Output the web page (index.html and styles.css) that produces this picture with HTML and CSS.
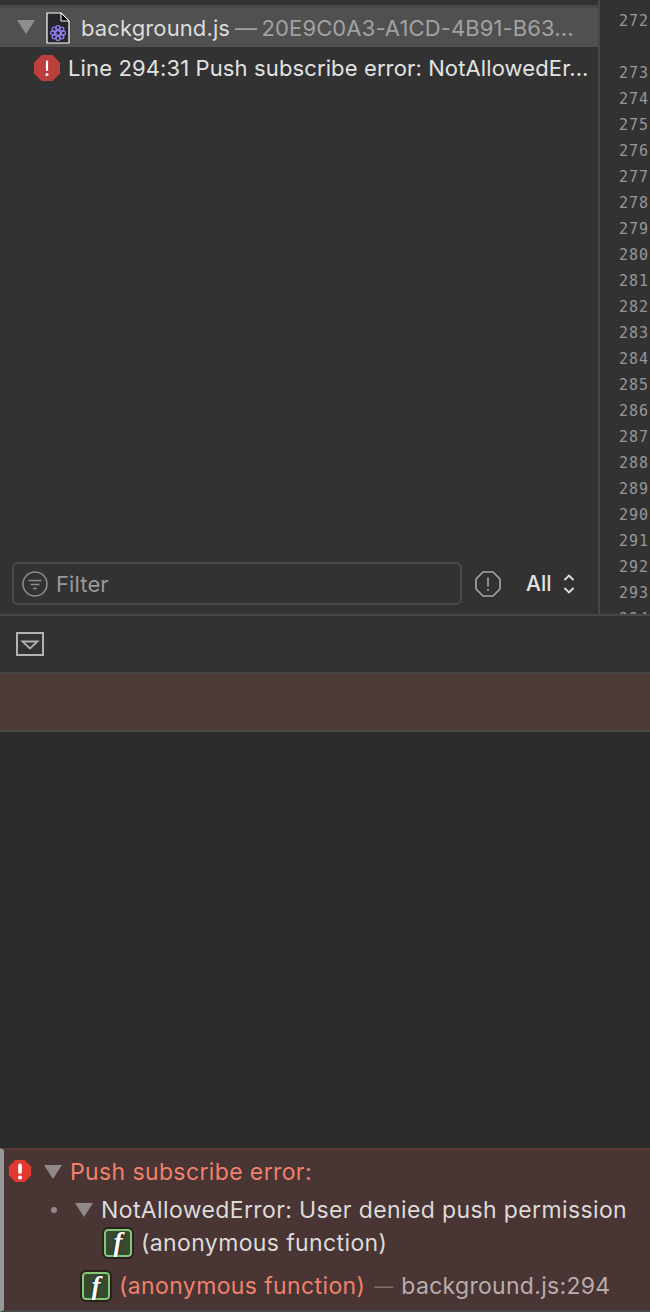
FILE: index.html
```html
<!DOCTYPE html>
<html lang="en">
<head>
<meta charset="utf-8">
<title>Web Inspector</title>
<link rel="stylesheet" href="styles.css">
</head>
<body>
<div class="app">
  <section class="top">
    <aside class="sidebar">
      <div class="sidebar-head"></div>
      <div class="tree">
        <div class="file-row">
          <svg class="disclosure" viewBox="0 0 18 14"><path d="M0 0H18L9 14Z"/></svg>
          <svg class="file-icon" viewBox="0 0 24 32">
            <path d="M1 1H15L23 9V31H1Z" fill="#26262a" stroke="#fff" stroke-width="1.2"/>
            <path d="M15 1L23 9H15Z" fill="#000" stroke="#fff" stroke-width="1"/>
            <g fill="none" stroke="#8f7cf0" stroke-width="1.3">
              <circle cx="12" cy="21" r="2.4"/>
              <circle cx="12" cy="15.6" r="2"/><circle cx="15.8" cy="17.2" r="2"/>
              <circle cx="17.4" cy="21" r="2"/><circle cx="15.8" cy="24.8" r="2"/>
              <circle cx="12" cy="26.4" r="2"/><circle cx="8.2" cy="24.8" r="2"/>
              <circle cx="6.6" cy="21" r="2"/><circle cx="8.2" cy="17.2" r="2"/>
            </g>
          </svg>
          <span class="file-name">background.js</span>
          <span class="file-id">— 20E9C0A3-A1CD-4B91-B63...</span>
        </div>
        <div class="issue-row">
          <svg class="issue-icon" viewBox="0 0 28 28">
            <path d="M8.5 1H19.5L27 8.5V19.5L19.5 27H8.5L1 19.5V8.5Z" fill="#bb3f3d"/>
            <rect x="12.9" y="6.5" width="2.2" height="10.5" rx="1" fill="#fff"/>
            <circle cx="14" cy="20.5" r="1.5" fill="#fff"/>
          </svg>
          <span class="issue-text">Line 294:31 Push subscribe error: NotAllowedEr...</span>
        </div>
      </div>
      <div class="filter-bar">
        <div class="filter-box">
          <svg class="filter-icon" viewBox="0 0 26 26" fill="none" stroke="#8b8b8b" stroke-width="1.6">
            <circle cx="13" cy="13" r="12"/>
            <path d="M6.5 9.5H19.5M8.5 13.5H17.5M11 17.5H15"/>
          </svg>
          <span class="filter-label">Filter</span>
        </div>
        <svg class="warn-icon" viewBox="0 0 26 26" fill="none" stroke="#a5a5a5" stroke-width="1.6">
          <path d="M8 1H18L25 8V18L18 25H8L1 18V8Z"/>
          <path d="M13 6.5V15.5M13 18V20"/>
        </svg>
        <span class="scope">All</span>
        <svg class="updown" viewBox="0 0 12 22" fill="none" stroke="#dcdcdc" stroke-width="1.9">
          <path d="M1.5 7L6 2.5L10.5 7M1.5 15L6 19.5L10.5 15"/>
        </svg>
      </div>
    </aside>
    <div class="gutter">
      <div class="ln ln-tall">272</div>
      <div class="ln">273</div><div class="ln">274</div><div class="ln">275</div><div class="ln">276</div>
      <div class="ln">277</div><div class="ln">278</div><div class="ln">279</div><div class="ln">280</div>
      <div class="ln">281</div><div class="ln">282</div><div class="ln">283</div><div class="ln">284</div>
      <div class="ln">285</div><div class="ln">286</div><div class="ln">287</div><div class="ln">288</div>
      <div class="ln">289</div><div class="ln">290</div><div class="ln">291</div><div class="ln">292</div>
      <div class="ln">293</div><div class="ln">294</div>
    </div>
  </section>
  <div class="toolbar">
    <svg class="toggle" viewBox="0 0 28 24" fill="none" stroke="#b2b2b2" stroke-width="2">
      <rect x="1" y="1" width="26" height="22"/>
      <path d="M6.5 9.5H21.5L14 16.5Z" stroke-width="1.8"/>
    </svg>
  </div>
  <div class="banner"></div>
  <div class="console-space"></div>
  <section class="message">
    <div class="msg-row msg-head">
      <svg class="err-icon" viewBox="0 0 26 26">
        <path d="M8 1H18L25 8V18L18 25H8L1 18V8Z" fill="#e0392f"/>
        <rect x="11" y="5" width="4" height="11" rx="2" fill="#fff"/>
        <circle cx="13" cy="20" r="2.2" fill="#fff"/>
      </svg>
      <svg class="tri tri-head" viewBox="0 0 18 14"><path d="M0 0H18L9 14Z"/></svg>
      <span class="err-text">Push subscribe error:</span>
    </div>
    <div class="msg-row msg-sub">
      <span class="bullet"></span>
      <svg class="tri tri-sub" viewBox="0 0 18 14"><path d="M0 0H18L9 14Z"/></svg>
      <span class="plain">NotAllowedError: User denied push permission</span>
    </div>
    <div class="msg-row msg-fn">
      <span class="fn-badge">f</span>
      <span class="plain">(anonymous function)</span>
    </div>
    <div class="msg-row msg-frame">
      <span class="fn-badge">f</span>
      <span class="err-text">(anonymous function)</span>
      <span class="frame-dash">—</span>
      <span class="frame-loc">background.js:294</span>
    </div>
  </section>
</div>
</body>
</html>
```
FILE: styles.css
```css
* { box-sizing: border-box; }
html, body { margin: 0; padding: 0; }
body {
  width: 650px;
  height: 1312px;
  overflow: hidden;
  background: #2b2b2b;
  font-family: Inter, "Liberation Sans", sans-serif;
  font-size: 22px;
}
svg { display: block; flex: none; }
.app { display: flex; flex-direction: column; height: 1312px; }

.top { display: flex; height: 616px; background: #323232; border-bottom: 2px solid #474747; overflow: hidden; flex: none; }
.sidebar { width: 600px; flex: none; display: flex; flex-direction: column; border-right: 2px solid #474747; letter-spacing: .12px; }
.sidebar-head { height: 8px; flex: none; border-bottom: 3px solid #474747; background: #323232; }
.tree { flex: 1; }
.file-row { display: flex; align-items: center; height: 39px; background: #505050; padding-left: 17px; white-space: nowrap; }
.disclosure { width: 18px; height: 14px; fill: #8e8e8e; margin-right: 11px; margin-top: -2px; }
.file-icon { width: 24px; height: 32px; margin-right: 11px; }
.file-name { color: #dcdcdc; }
.file-id { color: #a2a2a2; margin-left: 5px; word-spacing: -2px; }
.issue-row { display: flex; align-items: center; height: 42px; padding-left: 33px; white-space: nowrap; }
.issue-icon { width: 28px; height: 28px; margin-right: 7px; }
.issue-text { color: #e2e2e2; }

.filter-bar { display: flex; align-items: center; height: 43px; margin-bottom: 9px; padding-left: 12px; flex: none; }
.filter-box { display: flex; align-items: center; width: 450px; height: 43px; border: 2px solid #4a4a4a; border-radius: 6px; padding-left: 8px; }
.filter-icon { width: 26px; height: 26px; margin-right: 8px; }
.filter-label { color: #989898; }
.warn-icon { width: 26px; height: 26px; margin-left: 13px; }
.scope { color: #e2e2e2; margin-left: 25px; font-size: 21px; font-weight: 500; letter-spacing: 0; }
.updown { width: 12px; height: 22px; margin-left: 12px; }

.gutter { flex: 1; padding: 8px 0 0 19px; overflow: hidden; }
.ln { height: 26px; line-height: 26px; color: #979797; font-family: "DejaVu Sans Mono", monospace; font-size: 15px; letter-spacing: 1px; white-space: nowrap; }
.ln-tall { height: 52px; }

.toolbar { height: 58px; flex: none; background: #323232; border-bottom: 2px solid #474747; display: flex; align-items: center; padding-left: 16px; }
.toggle { width: 28px; height: 24px; }
.banner { height: 58px; flex: none; background: #4b3a35; border-bottom: 2px solid #484848; }
.console-space { flex: 1; background: #2b2b2b; }

.message { height: 164px; flex: none; background: #483534; border-top: 2px solid #5b3a2f; border-bottom: 2px solid #484848; border-left: 4px solid #989898; font-size: 23px; letter-spacing: .38px; }
.msg-row { display: flex; align-items: center; white-space: nowrap; }
.msg-head { height: 44px; padding-left: 4px; }
.msg-sub { height: 32px; padding-left: 46px; }
.msg-fn { height: 33px; padding-left: 100px; }
.msg-frame { height: 51px; padding-left: 78px; padding-top: 3px; }
.err-icon { width: 24px; height: 24px; margin-right: 12px; margin-top: -3px; }
.tri { width: 18px; height: 14px; fill: #8f8a89; }
.tri-head { margin-right: 8px; }
.tri-sub { margin-right: 8px; margin-left: 18px; }
.bullet { width: 6px; height: 6px; border-radius: 50%; background: #8f8a89; flex: none; margin-left: 1px; }
.err-text { color: #f0816b; }
.plain { color: #dedada; }
.fn-badge {
  width: 28px; height: 28px; flex: none; margin-right: 9px;
  display: flex; align-items: center; justify-content: center;
  background: #38492f; color: #fff;
  border: 2px solid #82c975; outline: 2px solid #2a2020;
  border-radius: 4px;
  font-family: "Liberation Serif", serif; font-style: italic; font-weight: 700; font-size: 27px; line-height: 1; letter-spacing: 0;
  text-shadow: 0 0 2px #111;
}
.msg-fn .fn-badge { margin-right: 10px; }
.msg-fn .plain { margin-left: -1px; }
.frame-dash { color: #7e6f6d; margin-left: 9px; font-size: 19px; letter-spacing: 0; }
.frame-loc { color: #b8adac; margin-left: 8px; letter-spacing: .3px; }
```
